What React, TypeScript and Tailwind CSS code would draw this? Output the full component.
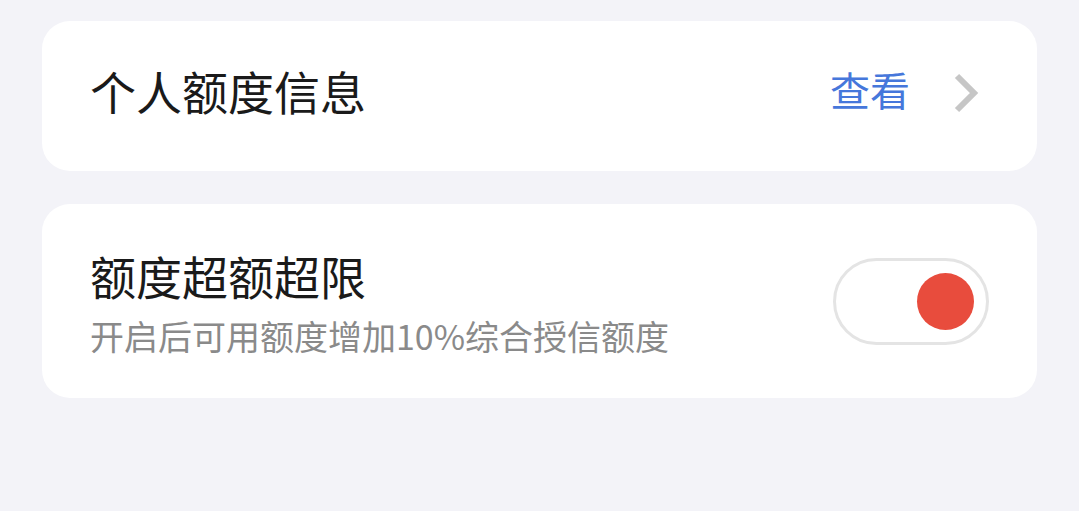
const font = "font-['Noto_Sans_CJK_SC','Noto_Sans',sans-serif]";

const Chevron = () => (
  <svg width="28" height="42" viewBox="0 0 28 42" fill="none">
    <path d="M5 4 L22 21 L5 38" stroke="#c6c6c6" strokeWidth="6" strokeLinejoin="miter" />
  </svg>
);

const Toggle = ({ on }: { on: boolean }) => (
  <div className="w-[156px] h-[87px] rounded-full border-[3px] border-[#e4e4e4] bg-white flex items-center justify-end pr-[12px]">
    {on && <div className="w-[57px] h-[57px] rounded-full bg-[#e84c3d]" />}
  </div>
);

export default function App() {
  return (
    <div className={`w-[1079px] h-[511px] bg-[#f3f3f8] px-[42px] pt-[21px] flex flex-col gap-[33px] ${font}`}>
      {/* personal quota */}
      <div className="h-[150px] bg-white rounded-[28px] pl-[48px] pr-[57px] flex items-center justify-between">
        <span className="text-[46px] leading-[56px] mb-[12px] text-[#1a1a1a]">个人额度信息</span>
        <div className="flex items-center gap-[42px] mb-[6px]">
          <span className="text-[40px] leading-[48px] mb-[8px] text-[#4677db]">查看</span>
          <Chevron />
        </div>
      </div>

      {/* over-limit switch */}
      <div className="h-[194px] bg-white rounded-[28px] pl-[48px] pr-[48px] flex items-center justify-between">
        <div className="flex flex-col pt-[2px]">
          <span className="text-[46px] leading-[56px] text-[#1a1a1a]">额度超额超限</span>
          <span className="mt-[11px] text-[34px] leading-[44px] text-[#8a8a8a]">开启后可用额度增加10%综合授信额度</span>
        </div>
        <Toggle on />
      </div>
    </div>
  );
}
